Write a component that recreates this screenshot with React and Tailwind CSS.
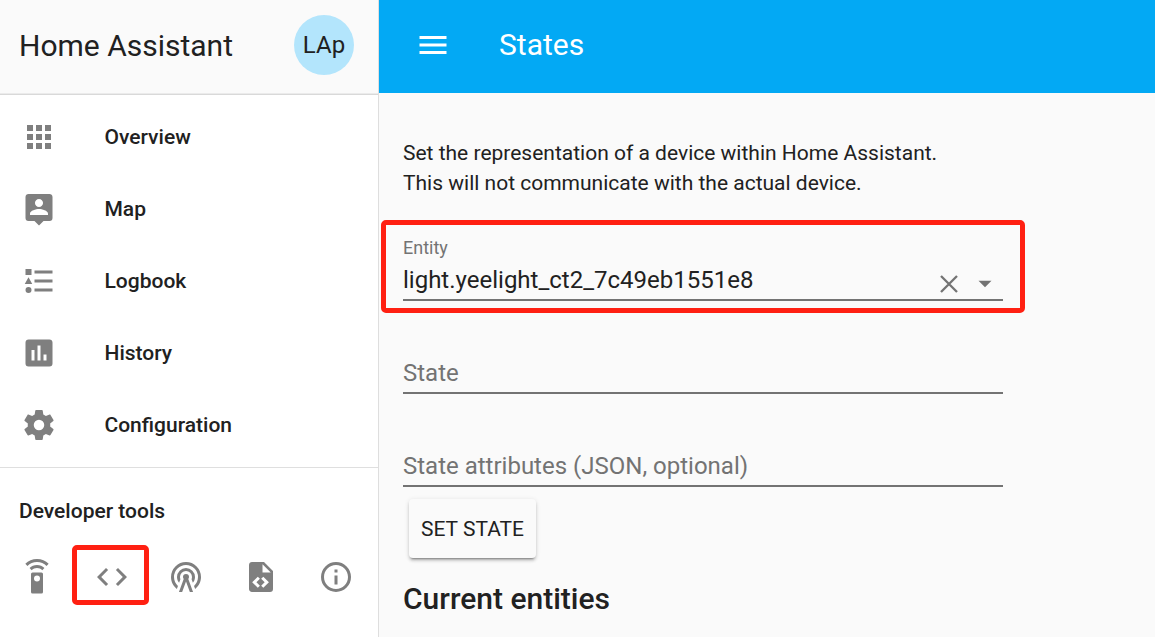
const ICONS = {
  apps: 'M16,20H20V16H16M16,14H20V10H16M10,8H14V4H10M16,8H20V4H16M10,14H14V10H10M4,14H8V10H4M4,20H8V16H4M10,20H14V16H10M4,8H8V4H4V8Z',
  map: 'M18,16H6V15.1C6,13.1 10,12 12,12C14,12 18,13.1 18,15.1M12,5.3C13.5,5.3 14.7,6.5 14.7,8C14.7,9.5 13.5,10.7 12,10.7C10.5,10.7 9.3,9.5 9.3,8C9.3,6.5 10.5,5.3 12,5.3M19,2H5C3.89,2 3,2.89 3,4V18A2,2 0 0,0 5,20H9L12,23L15,20H19A2,2 0 0,0 21,18V4C21,2.89 20.1,2 19,2Z',
  logbook: 'M5,9.5L7.5,14H2.5L5,9.5M3,4H7V8H3V4M5,20A2,2 0 0,0 7,18A2,2 0 0,0 5,16A2,2 0 0,0 3,18A2,2 0 0,0 5,20M9,5V7H21V5H9M9,19H21V17H9V19M9,13H21V11H9V13Z',
  history: 'M17,17H15V13H17M13,17H11V7H13M9,17H7V10H9M19,3H5C3.89,3 3,3.89 3,5V19A2,2 0 0,0 5,21H19A2,2 0 0,0 21,19V5C21,3.89 20.1,3 19,3Z',
  settings: 'M12,15.5A3.5,3.5 0 0,1 8.5,12A3.5,3.5 0 0,1 12,8.5A3.5,3.5 0 0,1 15.5,12A3.5,3.5 0 0,1 12,15.5M19.43,12.97C19.47,12.65 19.5,12.33 19.5,12C19.5,11.67 19.47,11.34 19.43,11L21.54,9.37C21.73,9.22 21.78,8.95 21.66,8.73L19.66,5.27C19.54,5.05 19.27,4.96 19.05,5.05L16.56,6.05C16.04,5.66 15.5,5.32 14.87,5.07L14.5,2.42C14.46,2.18 14.25,2 14,2H10C9.75,2 9.54,2.18 9.5,2.42L9.13,5.07C8.5,5.32 7.96,5.66 7.44,6.05L4.95,5.05C4.73,4.96 4.46,5.05 4.34,5.27L2.34,8.73C2.21,8.95 2.27,9.22 2.46,9.37L4.57,11C4.53,11.34 4.5,11.67 4.5,12C4.5,12.33 4.53,12.65 4.57,12.97L2.46,14.63C2.27,14.78 2.21,15.05 2.34,15.27L4.34,18.73C4.46,18.95 4.73,19.03 4.95,18.95L7.44,17.94C7.96,18.34 8.5,18.68 9.13,18.93L9.5,21.58C9.54,21.82 9.75,22 10,22H14C14.25,22 14.46,21.82 14.5,21.58L14.87,18.93C15.5,18.67 16.04,18.34 16.56,17.94L19.05,18.95C19.27,19.03 19.54,18.95 19.66,18.73L21.66,15.27C21.78,15.05 21.73,14.78 21.54,14.63L19.43,12.97Z',
  remote: 'M12,0C8.96,0 6.21,1.23 4.22,3.22L5.63,4.63C7.26,3 9.5,2 12,2C14.5,2 16.74,3 18.36,4.64L19.77,3.23C17.79,1.23 15.04,0 12,0M7.05,6.05L8.46,7.46C9.37,6.56 10.62,6 12,6C13.38,6 14.63,6.56 15.54,7.46L16.95,6.05C15.68,4.78 13.93,4 12,4C10.07,4 8.32,4.78 7.05,6.05M12,15A2,2 0 0,1 10,13A2,2 0 0,1 12,11A2,2 0 0,1 14,13A2,2 0 0,1 12,15M15,9H9A1,1 0 0,0 8,10V22A1,1 0 0,0 9,23H15A1,1 0 0,0 16,22V10A1,1 0 0,0 15,9Z',
  code: 'M14.6,16.6L19.2,12L14.6,7.4L16,6L22,12L16,18L14.6,16.6M9.4,16.6L4.8,12L9.4,7.4L8,6L2,12L8,18L9.4,16.6Z',
  tower: 'M12,10A2,2 0 0,1 14,12C14,12.5 13.82,12.94 13.53,13.29L16.7,22H14.57L12,14.93L9.43,22H7.3L10.47,13.29C10.18,12.94 10,12.5 10,12A2,2 0 0,1 12,10M12,8A4,4 0 0,0 8,12C8,12.5 8.1,13 8.28,13.46L7.4,15.86C6.53,14.81 6,13.47 6,12A6,6 0 0,1 12,6A6,6 0 0,1 18,12C18,13.47 17.47,14.81 16.6,15.86L15.72,13.46C15.9,13 16,12.5 16,12A4,4 0 0,0 12,8M12,4A8,8 0 0,0 4,12C4,14.36 5,16.5 6.64,17.94L5.92,19.94C3.54,18.11 2,15.23 2,12A10,10 0 0,1 12,2A10,10 0 0,1 22,12C22,15.23 20.46,18.11 18.08,19.94L17.36,17.94C19,16.5 20,14.36 20,12A8,8 0 0,0 12,4Z',
  file: 'M13,9H18.5L13,3.5V9M6,2H14L20,8V20A2,2 0 0,1 18,22H6C4.89,22 4,21.1 4,20V4C4,2.89 4.89,2 6,2M6.12,15.5L9.86,19.24L11.28,17.83L8.95,15.5L11.28,13.17L9.86,11.76L6.12,15.5M17.28,15.5L13.54,11.76L12.12,13.17L14.45,15.5L12.12,17.83L13.54,19.24L17.28,15.5Z',
  info: 'M11,9H13V7H11M12,20C7.59,20 4,16.41 4,12C4,7.59 7.59,4 12,4C16.41,4 20,7.59 20,12C20,16.41 16.41,20 12,20M12,2A10,10 0 0,0 2,12A10,10 0 0,0 12,22A10,10 0 0,0 22,12A10,10 0 0,0 12,2M11,17H13V11H11V17Z',
  menu: 'M3,6H21V8H3V6M3,11H21V13H3V11M3,16H21V18H3V16Z',
};

const NAV = [
  ['apps', 'Overview'],
  ['map', 'Map'],
  ['logbook', 'Logbook'],
  ['history', 'History'],
  ['settings', 'Configuration'],
];

function Icon({ name }) {
  return (
    <svg viewBox="0 0 24 24" className="size-9 shrink-0 fill-current">
      <path d={ICONS[name]} />
    </svg>
  );
}

function Sidebar() {
  return (
    <aside className="flex w-[379px] shrink-0 flex-col border-r border-[#dedede] bg-white">
      <header className="flex h-[93px] shrink-0 items-center justify-between bg-[#fafafa] pr-6 pb-[3px] pl-[19px]">
        <h1 className="pt-px text-[30px] leading-9 font-normal">Home Assistant</h1>
        <div className="flex size-[60px] items-center justify-center rounded-full bg-[#b3e5fc] text-2xl">
          LAp
        </div>
      </header>
      <div className="h-px shrink-0 bg-[#ebebeb]" />
      <div className="h-px shrink-0 bg-[#d9d9d9]" />
      <nav className="mt-1.5">
        {NAV.map(([icon, label]) => (
          <a key={label} className="flex h-[72px] items-center gap-[47.5px] pl-[21px] text-[21px] font-medium">
            <span className="text-[#7f7f7f]"><Icon name={icon} /></span>
            <span className="pt-0.5">{label}</span>
          </a>
        ))}
      </nav>
      <div className="mt-1.5 h-px shrink-0 bg-[#dfdfdf]" />
      <h2 className="mt-[27px] pl-[19px] text-[21px] leading-8 font-medium">Developer tools</h2>
      <div className="mt-8 flex gap-[38.7px] pl-[19px] text-[#7f7f7f]">
        <Icon name="remote" />
        <div className="relative">
          <Icon name="code" />
          <div className="absolute -top-[14px] -left-[22px] h-[60px] w-[77px] rounded-[5px] border-[5px] border-[#ff2012]" />
        </div>
        <Icon name="tower" />
        <Icon name="file" />
        <Icon name="info" />
      </div>
    </aside>
  );
}

function Main() {
  return (
    <main className="min-w-0 flex-1">
      <header className="flex h-[93px] items-center bg-[#03a9f4] pb-[3px] pl-9 text-white">
        <Icon name="menu" />
        <h2 className="ml-12 text-[30px] leading-9">States</h2>
      </header>
      <div className="w-[624px] pt-[45px] pl-6">
        <p className="text-[21px] leading-[30px] whitespace-nowrap">
          Set the representation of a device within Home Assistant.
          <br />
          This will not communicate with the actual device.
        </p>
        <div className="relative mt-[39px] flex h-16 flex-col border-b-2 border-[#737373]">
          <label className="text-lg leading-[22px] text-[#737373]">Entity</label>
          <div className="mt-[5px] flex justify-between">
            <span className="text-2xl leading-8">light.yeelight_ct2_7c49eb1551e8</span>
            <div className="flex items-center gap-5 pt-2 pr-[11px] text-[#737373]">
              <svg viewBox="0 0 18 18" className="size-[18px]" fill="none" stroke="currentColor" strokeWidth="2.3">
                <path d="M1 1L17 17M17 1L1 17" />
              </svg>
              <svg viewBox="0 0 14 8" className="h-2 w-3.5 fill-current">
                <path d="M.5 .7H13.5L7 7.2Z" />
              </svg>
            </div>
          </div>
          <div className="absolute -top-[17px] -left-[22px] h-[93px] w-[644px] rounded-[5px] border-[5px] border-[#ff2012]" />
        </div>
        <div className="mt-14 h-[37px] border-b-2 border-[#737373] text-2xl leading-8 text-[#737373]">State</div>
        <div className="mt-14 h-[37px] border-b-2 border-[#737373] text-2xl leading-8 text-[#737373]">
          State attributes (JSON, optional)
        </div>
        <button className="mt-3 ml-1.5 flex h-[59px] w-[127px] items-center justify-center rounded-[4px] bg-[#fafafa] pt-0.5 text-[21px] whitespace-nowrap shadow-[0_3px_3px_0_rgba(0,0,0,0.14),0_1px_5px_0_rgba(0,0,0,0.12),0_3px_2px_-2px_rgba(0,0,0,0.35)]">
          SET STATE
        </button>
        <h3 className="mt-[23px] text-[30px] leading-9 font-medium">Current entities</h3>
      </div>
    </main>
  );
}

export default function App() {
  return (
    <div className="flex h-[637px] w-[1155px] overflow-hidden bg-[#fafafa] font-[Roboto,sans-serif] text-[#212121] antialiased">
      <Sidebar />
      <Main />
    </div>
  );
}
